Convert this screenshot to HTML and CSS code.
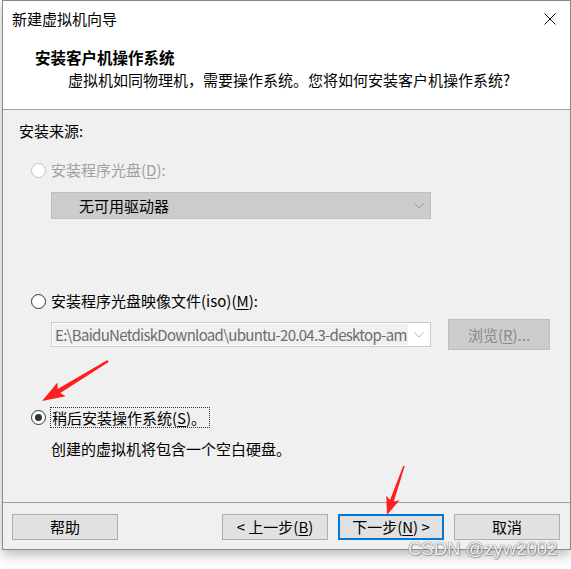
FILE: index.html
```html
<!DOCTYPE html>
<html lang="zh-CN">
<head>
<meta charset="utf-8">
<title>新建虚拟机向导</title>
<link rel="stylesheet" href="styles.css">
</head>
<body>
<div class="window">
  <div class="titlebar">
    <span class="title">新建虚拟机向导</span>
    <svg class="close" width="12" height="12" viewBox="0 0 12 12"><path d="M0.5 0.5 L11.5 11.5 M11.5 0.5 L0.5 11.5" stroke="#111" stroke-width="1" fill="none"/></svg>
  </div>
  <div class="header">
    <div class="h-title">安装客户机操作系统</div>
    <div class="h-sub">虚拟机如同物理机，需要操作系统。您将如何安装客户机操作系统?</div>
  </div>
  <div class="content">
    <div class="src">安装来源:</div>
    <div class="radio-row disabled r1"><span class="radio"></span><span>安装程序光盘(<u>D</u>):</span></div>
    <div class="select">
      <span class="select-text">无可用驱动器</span>
      <svg class="chev" width="10" height="6" viewBox="0 0 10 6"><path d="M0.5 0.5 L5 5 L9.5 0.5" stroke="#9a9a9a" stroke-width="1" fill="none"/></svg>
    </div>
    <div class="radio-row r2"><span class="radio"></span><span>安装程序光盘映像文件(iso)(<u>M</u>):</span></div>
    <div class="iso-row">
      <div class="combo">
        <span class="combo-text">E:\BaiduNetdiskDownload\ubuntu-20.04.3-desktop-am</span>
        <svg class="chev" width="10" height="6" viewBox="0 0 10 6"><path d="M0.5 0.5 L5 5 L9.5 0.5" stroke="#b4b4b4" stroke-width="1" fill="none"/></svg>
      </div>
      <div class="btn btn-disabled">浏览(<u>R</u>)...</div>
    </div>
    <div class="radio-row r3"><span class="radio checked"></span><span class="focus">稍后安装操作系统(<u>S</u>)。</span></div>
    <div class="note">创建的虚拟机将包含一个空白硬盘。</div>
  </div>
  <div class="footer">
    <div class="btn">帮助</div>
    <div class="btn push">&lt; 上一步(<u>B</u>)</div>
    <div class="btn primary">下一步(<u>N</u>) &gt;</div>
    <div class="btn">取消</div>
  </div>
</div>
<svg class="arrows" width="571" height="569" viewBox="0 0 571 569">
  <polygon points="108.6,361.9 60.3,393.1 65.7,396.2 42,401 57.5,382.6 57.7,388.9 107.4,360.1" fill="#ff1e1e"/>
  <polygon points="404.7,466.2 393.8,501.5 399.5,500.3 387,515 386.3,495.7 390.0,500.1 403.3,465.8" fill="#ff1e1e"/>
</svg>
<div class="watermark">CSDN @zyw2002</div>
</body>
</html>
```

FILE: styles.css
```css
html, body {
  margin: 0;
  padding: 0;
}
body {
  width: 571px;
  height: 569px;
  overflow: hidden;
  background: #ffffff;
  font-family: "Microsoft YaHei UI", "Noto Sans CJK SC", sans-serif;
  font-size: 15px;
  color: #000;
  position: relative;
}
u {
  text-decoration: underline;
  text-underline-offset: 2px;
}
.window {
  margin-left: 2px;
  width: 567px;
  border: 1px solid #8a8a8a;
  background: #f0f0f0;
  box-shadow: 0 5px 12px rgba(0, 0, 0, 0.28);
}
.titlebar {
  height: 36px;
  background: #fff;
  display: flex;
  align-items: center;
  justify-content: space-between;
  padding: 0 14px 0 9px;
}
.title {
  line-height: 20px;
}
.close {
  display: block;
}
.header {
  height: 73px;
  box-sizing: border-box;
  background: #fff;
  border-bottom: 1px solid #a0a0a0;
  padding-top: 10px;
}
.h-title {
  font-weight: bold;
  font-size: 15.5px;
  line-height: 20px;
  padding-left: 32px;
}
.h-sub {
  line-height: 20px;
  margin-top: 3px;
  padding-left: 65px;
}
.content {
  height: 392px;
  box-sizing: border-box;
  padding: 11px 0 0 16px;
}
.src {
  line-height: 20px;
}
.radio-row {
  display: flex;
  align-items: center;
  gap: 5px;
  height: 20px;
  line-height: 20px;
  margin-left: 12px;
}
.radio {
  width: 15px;
  height: 15px;
  box-sizing: border-box;
  border: 1px solid #333;
  border-radius: 50%;
  background: #fff;
  position: relative;
  flex: none;
}
.radio.checked::after {
  content: "";
  position: absolute;
  inset: 3px;
  border-radius: 50%;
  background: #333;
}
.disabled {
  color: #a0a0a0;
}
.disabled .radio {
  border-color: #c2c2c2;
}
.r1 {
  margin-top: 19px;
}
.select {
  margin: 12px 0 0 32px;
  width: 380px;
  height: 27px;
  box-sizing: border-box;
  background: #cccccc;
  border: 1px solid #bfbfbf;
  display: flex;
  align-items: center;
  justify-content: space-between;
  padding: 0 6px 0 27px;
}
.chev {
  display: block;
}
.r2 {
  margin-top: 72px;
}
.iso-row {
  margin: 8px 0 0 32px;
  display: flex;
  align-items: center;
  gap: 17px;
}
.combo {
  width: 380px;
  height: 25px;
  box-sizing: border-box;
  border: 1px solid #cccccc;
  background: #fff;
  display: flex;
  align-items: center;
  justify-content: space-between;
  padding: 0 6px 0 1px;
}
.combo-text {
  background: #f0f0f0;
  color: #6d6d6d;
  padding: 0 2px;
  line-height: 21px;
  letter-spacing: -0.7px;
  white-space: nowrap;
  overflow: hidden;
  width: 355px;
  box-sizing: border-box;
}
.btn {
  width: 106px;
  height: 26px;
  box-sizing: border-box;
  background: #e1e1e1;
  border: 1px solid #adadad;
  display: flex;
  align-items: center;
  justify-content: center;
  line-height: 20px;
}
.btn-disabled {
  width: 102px;
  height: 31px;
  background: #cccccc;
  border-color: #bfbfbf;
  color: #8a8a8a;
}
.r3 {
  margin-top: 57px;
  height: 21px;
  gap: 4px;
}
.focus {
  border: 1px dotted #333;
  padding: 0 3px 0 1px;
  line-height: 19px;
}
.note {
  margin: 11px 0 0 32px;
  line-height: 20px;
}
.footer {
  border-top: 1px solid #a0a0a0;
  height: 47px;
  box-sizing: border-box;
  padding: 11px 10px 0 9px;
  display: flex;
  gap: 10px;
}
.push {
  margin-left: auto;
}
.primary {
  border: 2px solid #0078d7;
}
.arrows {
  position: absolute;
  left: 0;
  top: 0;
  pointer-events: none;
}
.watermark {
  position: absolute;
  left: 408px;
  top: 537px;
  font-family: "Liberation Sans", Arial, sans-serif;
  font-size: 18.5px;
  line-height: 24px;
  color: rgba(255, 255, 255, 0.9);
  text-shadow: 0 0 1px #777, 0 0 1px #777, 1px 1px 1px rgba(0, 0, 0, 0.25);
  white-space: nowrap;
}
```
